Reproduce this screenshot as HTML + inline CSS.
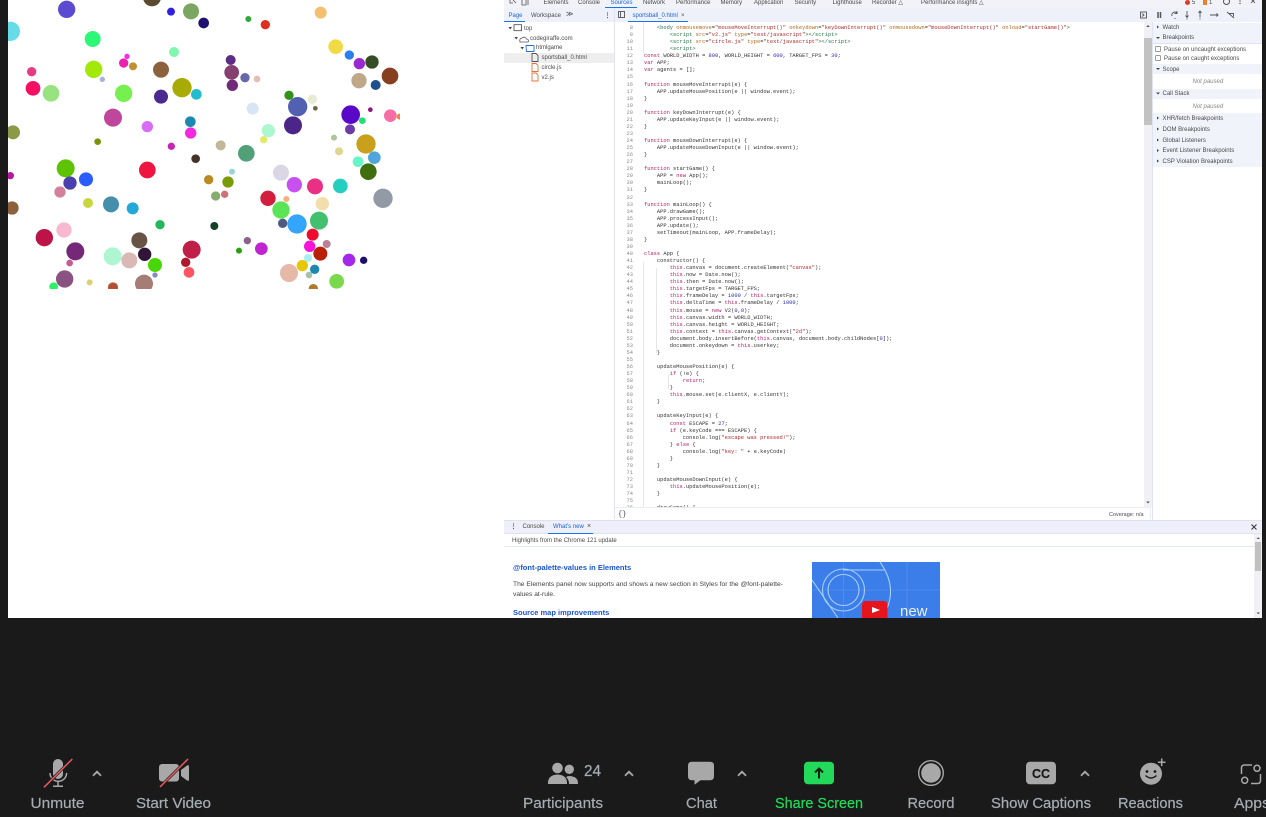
<!DOCTYPE html>
<html><head><meta charset="utf-8"><style>
html,body{margin:0;padding:0;width:1266px;height:817px;overflow:hidden;background:#1a1a1a}
#white{position:absolute;left:8px;top:0;width:1254px;height:618px;background:#fff;overflow:hidden}
#dev{position:absolute;left:0;top:0;width:1262px;height:618px;overflow:hidden;font-family:"Liberation Sans",sans-serif;color:#444;filter:blur(.35px)}
#dev div{position:absolute}
.t{position:absolute;font-size:6px;line-height:8px;white-space:nowrap;color:#4a4a4a;margin-top:.8px}
.b{color:#1a63d8}
pre{position:absolute;margin:0;font-family:"Liberation Mono",monospace;font-size:5.38px;line-height:7.06px;color:#333}
i{font-style:normal}
.k{color:#b5206e}.s{color:#b02a2a}.n{color:#2a2ab0}.a{color:#b06a20}.g{color:#2a7a4a}
</style></head><body>
<div id="white"></div>
<svg style="position:absolute;left:0;top:0;filter:blur(.3px)" width="420" height="300" viewBox="0 0 1260 900">
<defs><clipPath id="c"><rect x="24" y="0" width="1176" height="867"/></clipPath></defs>
<g clip-path="url(#c)">
<circle cx="200" cy="28" r="26" fill="#5a4bd1"/><circle cx="456" cy="-8" r="27" fill="#5c4a2e"/><circle cx="513" cy="35" r="12" fill="#2f1fe0"/><circle cx="573" cy="34" r="24" fill="#7ba662"/><circle cx="611" cy="69" r="16" fill="#1f1170"/><circle cx="745" cy="57" r="9" fill="#2fa83a"/><circle cx="796" cy="74" r="14" fill="#e02f20"/><circle cx="962" cy="38" r="18" fill="#f5bf70"/><circle cx="31" cy="94" r="29" fill="#66dde6"/><circle cx="278" cy="117" r="24" fill="#2df777"/><circle cx="522" cy="156" r="15" fill="#80f7ae"/><circle cx="381" cy="169" r="8" fill="#ee30e0"/><circle cx="371" cy="189" r="14" fill="#ee20b0"/><circle cx="399" cy="199" r="12" fill="#c29030"/><circle cx="692" cy="180" r="15" fill="#5c2d85"/><circle cx="695" cy="217" r="22" fill="#854070"/><circle cx="735" cy="233" r="14" fill="#6568aa"/><circle cx="771" cy="237" r="10" fill="#e5bdb5"/><circle cx="697" cy="256" r="17" fill="#722a7a"/><circle cx="281" cy="208" r="26" fill="#a2e808"/><circle cx="307" cy="238" r="8" fill="#a5b3e0"/><circle cx="483" cy="209" r="24" fill="#8c623c"/><circle cx="95" cy="215" r="14" fill="#e63b80"/><circle cx="99" cy="265" r="22" fill="#f50f62"/><circle cx="153" cy="280" r="25" fill="#98e380"/><circle cx="371" cy="280" r="26" fill="#76f04f"/><circle cx="483" cy="290" r="21" fill="#4a2a8e"/><circle cx="546" cy="263" r="29" fill="#a8ab05"/><circle cx="589" cy="283" r="16" fill="#22bccf"/><circle cx="1007" cy="140" r="22" fill="#f2d946"/><circle cx="1048" cy="165" r="14" fill="#2a80f0"/><circle cx="1078" cy="191" r="17" fill="#9a28d0"/><circle cx="1116" cy="186" r="20" fill="#344d25"/><circle cx="1170" cy="228" r="25" fill="#864020"/><circle cx="1077" cy="242" r="23" fill="#bfa788"/><circle cx="1127" cy="255" r="15" fill="#20508a"/><circle cx="867" cy="286" r="14" fill="#33901a"/><circle cx="937" cy="298" r="14" fill="#e5ebd5"/><circle cx="893" cy="320" r="29" fill="#5260b2"/><circle cx="946" cy="325" r="7" fill="#6a6545"/><circle cx="758" cy="326" r="18" fill="#d8e5f5"/><circle cx="879" cy="376" r="27" fill="#4c2589"/><circle cx="1052" cy="344" r="28" fill="#5a08c8"/><circle cx="1111" cy="329" r="7" fill="#93127e"/><circle cx="1087" cy="362" r="10" fill="#1fe070"/><circle cx="1171" cy="347" r="19" fill="#f76da5"/><circle cx="1199" cy="350" r="9" fill="#f5853a"/><circle cx="1050" cy="388" r="15" fill="#6e3aa8"/><circle cx="339" cy="353" r="27" fill="#c0459c"/><circle cx="442" cy="380" r="17" fill="#d86cf5"/><circle cx="571" cy="365" r="16" fill="#1c8ab0"/><circle cx="572" cy="399" r="17" fill="#f528e0"/><circle cx="791" cy="419" r="11" fill="#e3ea6a"/><circle cx="805" cy="392" r="20" fill="#adf7d0"/><circle cx="1002" cy="413" r="9" fill="#aec49a"/><circle cx="39" cy="397" r="21" fill="#8c9a48"/><circle cx="293" cy="425" r="10" fill="#7a9208"/><circle cx="514" cy="439" r="11" fill="#c228b8"/><circle cx="662" cy="436" r="15" fill="#c0b898"/><circle cx="739" cy="460" r="25" fill="#52a078"/><circle cx="1098" cy="432" r="29" fill="#c9a01c"/><circle cx="1017" cy="454" r="12" fill="#ddd68e"/><circle cx="1123" cy="473" r="19" fill="#4fa5dc"/><circle cx="1074" cy="485" r="16" fill="#68f5c8"/><circle cx="1105" cy="515" r="25" fill="#3e6e10"/><circle cx="587" cy="476" r="13" fill="#463228"/><circle cx="442" cy="510" r="25" fill="#ee1540"/><circle cx="197" cy="505" r="27" fill="#5ec305"/><circle cx="258" cy="538" r="21" fill="#2a5cff"/><circle cx="210" cy="549" r="20" fill="#4a40ad"/><circle cx="31" cy="527" r="11" fill="#b818a0"/><circle cx="180" cy="576" r="17" fill="#d4809c"/><circle cx="843" cy="518" r="24" fill="#dbd6e5"/><circle cx="696" cy="515" r="9" fill="#9ad5d5"/><circle cx="626" cy="539" r="14" fill="#ba8a20"/><circle cx="684" cy="546" r="17" fill="#7a9a08"/><circle cx="883" cy="554" r="23" fill="#c850ee"/><circle cx="945" cy="559" r="24" fill="#e93083"/><circle cx="1021" cy="558" r="22" fill="#25cfc0"/><circle cx="647" cy="588" r="14" fill="#87ad70"/><circle cx="674" cy="583" r="11" fill="#cf7078"/><circle cx="804" cy="595" r="23" fill="#d21f3e"/><circle cx="859" cy="597" r="9" fill="#f8ae7e"/><circle cx="967" cy="611" r="20" fill="#f3deab"/><circle cx="1149" cy="595" r="29" fill="#919aa5"/><circle cx="36" cy="624" r="20" fill="#8e603c"/><circle cx="264" cy="609" r="15" fill="#c9d640"/><circle cx="333" cy="613" r="24" fill="#458faa"/><circle cx="398" cy="625" r="18" fill="#24a8d8"/><circle cx="843" cy="630" r="26" fill="#5be455"/><circle cx="848" cy="670" r="14" fill="#4e5a80"/><circle cx="891" cy="672" r="29" fill="#33a5fa"/><circle cx="957" cy="662" r="27" fill="#42c06e"/><circle cx="480" cy="674" r="14" fill="#22b85a"/><circle cx="643" cy="678" r="12" fill="#144028"/><circle cx="133" cy="713" r="26" fill="#bc1448"/><circle cx="192" cy="690" r="23" fill="#f8b8d0"/><circle cx="418" cy="721" r="24" fill="#685444"/><circle cx="938" cy="704" r="18" fill="#f00a30"/><circle cx="742" cy="722" r="11" fill="#8c6090"/><circle cx="980" cy="732" r="12" fill="#bc8098"/><circle cx="226" cy="754" r="27" fill="#762878"/><circle cx="784" cy="746" r="19" fill="#c024d0"/><circle cx="717" cy="752" r="9" fill="#2ca00a"/><circle cx="929" cy="739" r="17" fill="#f515d8"/><circle cx="338" cy="769" r="27" fill="#aef5d2"/><circle cx="388" cy="781" r="24" fill="#d9b8b5"/><circle cx="434" cy="763" r="20" fill="#301538"/><circle cx="575" cy="749" r="27" fill="#c02048"/><circle cx="961" cy="761" r="21" fill="#b82008"/><circle cx="924" cy="774" r="12" fill="#a8eef5"/><circle cx="209" cy="789" r="10" fill="#c85898"/><circle cx="465" cy="795" r="21" fill="#48d808"/><circle cx="557" cy="787" r="14" fill="#ad1a30"/><circle cx="1047" cy="780" r="19" fill="#a428e8"/><circle cx="1091" cy="781" r="11" fill="#1e1068"/><circle cx="944" cy="808" r="14" fill="#1c88b0"/><circle cx="567" cy="817" r="16" fill="#ff5560"/><circle cx="465" cy="825" r="8" fill="#8c88c0"/><circle cx="867" cy="819" r="27" fill="#e5b8a8"/><circle cx="907" cy="797" r="17" fill="#e8c60c"/><circle cx="927" cy="825" r="10" fill="#a8c0b0"/><circle cx="194" cy="837" r="26" fill="#8a5280"/><circle cx="269" cy="847" r="9" fill="#e0cf70"/><circle cx="1010" cy="844" r="22" fill="#7ad84c"/><circle cx="432" cy="851" r="27" fill="#a67d75"/><circle cx="161" cy="860" r="13" fill="#2cf068"/><circle cx="339" cy="862" r="15" fill="#b25030"/><circle cx="940" cy="866" r="14" fill="#b07a2c"/>
</g></svg>

<div id="dev">
<div style="left:504px;top:0;width:758px;height:8px;background:#f1f3f9"></div>
<div style="left:504px;top:8px;width:758px;height:14px;background:#eef1f9"></div>
<div style="left:504px;top:22px;width:758px;height:1px;background:#dfe4f2"></div>
<div style="left:605px;top:7px;width:32px;height:1.2px;background:#1a73e8"></div>
<span class="t" style="left:543.5px;top:-1.5px">Elements</span><span class="t" style="left:578px;top:-1.5px">Console</span><span class="t b" style="left:610.5px;top:-1.5px">Sources</span><span class="t" style="left:643px;top:-1.5px">Network</span><span class="t" style="left:676px;top:-1.5px">Performance</span><span class="t" style="left:720.5px;top:-1.5px">Memory</span><span class="t" style="left:754px;top:-1.5px">Application</span><span class="t" style="left:794.5px;top:-1.5px">Security</span><span class="t" style="left:832.5px;top:-1.5px">Lighthouse</span><span class="t" style="left:872px;top:-1.5px">Recorder △</span><span class="t" style="left:921px;top:-1.5px">Performance insights △</span>
<svg style="position:absolute;left:504px;top:0" width="30" height="8"><path d="M6 0v3h3M12 3L9 0M18 0v5h4V0M24 0v5" stroke="#555" fill="none" stroke-width=".8"/></svg>
<span style="position:absolute;left:1185px;top:0;width:5px;height:5px;border-radius:50%;background:#e03a2e"></span><span class="t" style="left:1192px;top:-1.5px">5</span>
<span style="position:absolute;left:1203px;top:0;width:4px;height:5px;background:#e8812a"></span><span class="t" style="left:1209px;top:-1.5px">1</span>
<svg style="position:absolute;left:1220px;top:0" width="40" height="8"><circle cx="6.5" cy="1.5" r="3" fill="none" stroke="#555"/><circle cx="20" cy="1" r=".7" fill="#555"/><circle cx="20" cy="3.5" r=".7" fill="#555"/><path d="M31 -1l4 4M35 -1l-4 4" stroke="#444" stroke-width=".8"/></svg>

<!-- sources nav -->
<div style="left:504px;top:22px;width:110px;height:496px;background:#fff"></div>
<div style="left:614px;top:8px;width:1px;height:511px;background:#e0e4ef"></div>
<span class="t b" style="left:508.5px;top:11px">Page</span><div style="left:504px;top:21px;width:21px;height:1.2px;background:#1a73e8"></div>
<span class="t" style="left:531px;top:11px">Workspace</span><span class="t" style="left:566px;top:10px;font-size:7px">≫</span>
<span class="t" style="left:604.5px;top:11px;font-weight:bold">⋮</span>
<svg style="position:absolute;left:617px;top:10px" width="12" height="10"><rect x="1.5" y="1.5" width="6" height="6" fill="none" stroke="#555" stroke-width=".9"/><path d="M3.5 1.5v6" stroke="#555" stroke-width=".9"/></svg>
<span class="t b" style="left:632.5px;top:11px">sportsball_0.html</span><span class="t" style="left:681px;top:11px">×</span>
<div style="left:628px;top:21px;width:60px;height:1.2px;background:#1a73e8"></div>
<div style="left:504px;top:52.5px;width:110px;height:10px;background:#eeeeee"></div>
<svg style="position:absolute;left:504px;top:22px" width="40" height="60"><path d="M4.5 5l1.7 2.5L8 5zM10.5 15l1.7 2.5L14 15zM16.5 25l1.7 2.5L20 25z" fill="#444"/><rect x="10" y="2.7" width="7.5" height="6" fill="none" stroke="#444" stroke-width=".8"/><path d="M16 20h8q1.5-2.5-1.5-3q-1.5-3-4.500-1q-3 .5-2 4z" fill="none" stroke="#555" stroke-width=".8"/><path d="M22 23.5h7.5a.5.5 0 0 1 .5.5v5.500h-7.500z" fill="none" stroke="#2a6fd8" stroke-width=".9"/><path d="M28 31.500h4l2 2v6h-6z" fill="none" stroke="#555" stroke-width=".9"/><path d="M28 41.500h4l2 2v6h-6zM28 51h4l2 2v6h-6z" fill="none" stroke="#e8713a" stroke-width=".9"/></svg>
<span class="t" style="left:524px;top:24px">top</span><span class="t" style="left:530px;top:34px">codegiraffe.com</span><span class="t" style="left:536px;top:43.5px">htmlgame</span><span class="t" style="left:541.5px;top:53.5px">sportsball_0.html</span><span class="t" style="left:541.5px;top:63px">circle.js</span><span class="t" style="left:541.5px;top:73px">v2.js</span>

<!-- editor -->
<div style="left:615px;top:22px;width:529px;height:485px;background:#fff;overflow:hidden">
<pre style="left:0;top:3px;width:18px;text-align:right;color:#8a8a8a">8
9
10
11
12
13
14
15
16
17
18
19
20
21
22
23
24
25
26
27
28
29
30
31
32
33
34
35
36
37
38
39
40
41
42
43
44
45
46
47
48
49
50
51
52
53
54
55
56
57
58
59
60
61
62
63
64
65
66
67
68
69
70
71
72
73
74
75
76</pre>
<div style="left:27.5px;top:0;width:1px;height:31px;background:#e6e6e6"></div>
<div style="left:27.5px;top:240px;width:1px;height:245px;background:#e6e6e6"></div>
<div style="left:40.5px;top:246px;width:1px;height:85px;background:#e6e6e6"></div>
<div style="left:53px;top:353px;width:1px;height:14px;background:#e6e6e6"></div>
<pre style="left:29px;top:3px">    <i class="g">&lt;body</i> <i class="a">onmousemove</i>=<i class="s">"mouseMoveInterrupt()"</i> <i class="a">onkeydown</i>=<i class="s">"keyDownInterrupt()"</i> <i class="a">onmousedown</i>=<i class="s">"mouseDownInterrupt()"</i> <i class="a">onload</i>=<i class="s">"startGame()"</i><i class="g">&gt;</i>
        <i class="g">&lt;script</i> <i class="a">src</i>=<i class="s">"v2.js"</i> <i class="a">type</i>=<i class="s">"text/javascript"</i><i class="g">&gt;&lt;/script&gt;</i>
        <i class="g">&lt;script</i> <i class="a">src</i>=<i class="s">"circle.js"</i> <i class="a">type</i>=<i class="s">"text/javascript"</i><i class="g">&gt;&lt;/script&gt;</i>
        <i class="g">&lt;script&gt;</i>
<i class="k">const</i> WORLD_WIDTH = <i class="n">800</i>, WORLD_HEIGHT = <i class="n">600</i>, TARGET_FPS = <i class="n">30</i>;
<i class="k">var</i> APP;
<i class="k">var</i> agents = [];

<i class="k">function</i> mouseMoveInterrupt(e) {
    APP.updateMousePosition(e || window.event);
}

<i class="k">function</i> keyDownInterrupt(e) {
    APP.updateKeyInput(e || window.event);
}

<i class="k">function</i> mouseDownInterrupt(e) {
    APP.updateMouseDownInput(e || window.event);
}

<i class="k">function</i> startGame() {
    APP = <i class="k">new</i> App();
    mainLoop();
}

<i class="k">function</i> mainLoop() {
    APP.drawGame();
    APP.processInput();
    APP.update();
    setTimeout(mainLoop, APP.frameDelay);
}

<i class="k">class</i> App {
    constructor() {
        <i class="k">this</i>.canvas = document.createElement(<i class="s">"canvas"</i>);
        <i class="k">this</i>.now = Date.now();
        <i class="k">this</i>.then = Date.now();
        <i class="k">this</i>.targetFps = TARGET_FPS;
        <i class="k">this</i>.frameDelay = <i class="n">1000</i> / <i class="k">this</i>.targetFps;
        <i class="k">this</i>.deltaTime = <i class="k">this</i>.frameDelay / <i class="n">1000</i>;
        <i class="k">this</i>.mouse = <i class="k">new</i> V2(<i class="n">0</i>,<i class="n">0</i>);
        <i class="k">this</i>.canvas.width = WORLD_WIDTH;
        <i class="k">this</i>.canvas.height = WORLD_HEIGHT;
        <i class="k">this</i>.context = <i class="k">this</i>.canvas.getContext(<i class="s">"2d"</i>);
        document.body.insertBefore(<i class="k">this</i>.canvas, document.body.childNodes[<i class="n">0</i>]);
        document.onkeydown = <i class="k">this</i>.userkey;
    }

    updateMousePosition(e) {
        <i class="k">if</i> (!e) {
            <i class="k">return</i>;
        }
        <i class="k">this</i>.mouse.set(e.clientX, e.clientY);
    }

    updateKeyInput(e) {
        <i class="k">const</i> ESCAPE = <i class="n">27</i>;
        <i class="k">if</i> (e.keyCode === ESCAPE) {
            console.log(<i class="s">"escape was pressed!"</i>);
        } <i class="k">else</i> {
            console.log(<i class="s">"key: "</i> + e.keyCode)
        }
    }

    updateMouseDownInput(e) {
        <i class="k">this</i>.updateMousePosition(e);
    }

    drawGame() {</pre>
</div>
<!-- editor scrollbar -->
<div style="left:1144px;top:22px;width:7.5px;height:485px;background:#f1f0f4"></div>
<div style="left:1144px;top:38px;width:7.5px;height:87px;background:#c2c2c2"></div>
<svg style="position:absolute;left:1144px;top:22px" width="8" height="486"><path d="M2.2 5l1.8-2 1.8 2zM2.2 479.5l1.8 2 1.8-2z" fill="#555"/></svg>
<!-- status -->
<div style="left:615px;top:507px;width:536px;height:12px;background:#fff;border-top:1px solid #e8ecf6;box-sizing:border-box"></div>
<span class="t" style="left:618px;top:510px;font-family:'Liberation Mono',monospace;font-size:7px;color:#444">{}</span>
<span class="t" style="left:1109px;top:510px;font-size:5.5px">Coverage: n/a</span>
<div style="left:1149.5px;top:507px;width:1px;height:12px;background:#e8ecf6"></div>
<!-- toolbar right icons -->
<svg style="position:absolute;left:1135px;top:8px" width="120" height="14" fill="none" stroke="#555" stroke-width=".9"><rect x="5.5" y="4" width="6" height="6"/><path d="M7 5.5l2 1.5-2 1.500"/><path d="M23 4v6M25.5 4v6" stroke-width="1.5"/><path d="M37 8a3 3 0 0 1 5-3M42 3v2.500h-2.500M39.500 10.500h1M52 3v6M50.500 7.500L52 9.500l1.500-2M51.500 11h1M65 9.500v-6M63.500 5L65 3l1.500 2M64.500 11h1M75 7h8M81.500 5.500L83 7l-1.500 1.500M92 4l7 6M94 5.500h4.500v3"/></svg>
<!-- sidebar -->
<div style="left:1151.5px;top:22px;width:110.5px;height:596px;background:#fff;border-left:1px solid #dfe4f2;box-sizing:border-box"></div>
<div style="left:1152.5px;top:23px;width:110px;height:20px;background:#f1f3fb"></div>
<div style="left:1152.5px;top:42.5px;width:110px;height:.7px;background:#dfe4f2"></div>
<div style="left:1152.5px;top:64px;width:110px;height:9.5px;background:#f1f3fb"></div>
<div style="left:1152.5px;top:88.5px;width:110px;height:10px;background:#f1f3fb"></div>
<div style="left:1152.5px;top:113px;width:110px;height:53.5px;background:#f1f3fb"></div>
<span class="t" style="left:1162.5px;top:23px">Watch</span><span class="t" style="left:1162.5px;top:33.7px">Breakpoints</span><span class="t" style="left:1164px;top:45px">Pause on uncaught exceptions</span><span class="t" style="left:1164px;top:54px">Pause on caught exceptions</span><span class="t" style="left:1162.5px;top:65px">Scope</span><span class="t" style="left:1192.5px;top:77.5px;font-style:italic;color:#888">Not paused</span><span class="t" style="left:1162.5px;top:89.7px">Call Stack</span><span class="t" style="left:1192.5px;top:102px;font-style:italic;color:#888">Not paused</span><span class="t" style="left:1162.5px;top:114px">XHR/fetch Breakpoints</span><span class="t" style="left:1162.5px;top:125px">DOM Breakpoints</span><span class="t" style="left:1162.5px;top:136px">Global Listeners</span><span class="t" style="left:1162.5px;top:146.5px">Event Listener Breakpoints</span><span class="t" style="left:1162.5px;top:157px">CSP Violation Breakpoints</span>
<svg style="position:absolute;left:1152px;top:22px" width="12" height="146" fill="#444"><path d="M5 3.500l2 1.500-2 1.500zM4 15l2 2 2-2zM4 46l2 2 2-2zM4 70.500l2 2 2-2zM5 94.500l2 1.500-2 1.500zM5 105.500l2 1.500-2 1.500zM5 116.500l2 1.500-2 1.500zM5 127l2 1.500-2 1.500zM5 137.500l2 1.500-2 1.500z"/><rect x="3.500" y="24.500" width="5" height="5" rx=".6" fill="#fff" stroke="#777" stroke-width=".7"/><rect x="3.500" y="33.500" width="5" height="5" rx=".6" fill="#fff" stroke="#777" stroke-width=".7"/></svg>
<!-- drawer -->
<div style="left:504px;top:519.5px;width:758px;height:14px;background:#eeeff8;border-top:1px solid #dde3f4;border-bottom:1px solid #dde3f4;box-sizing:border-box"></div>
<div style="left:548px;top:532.5px;width:45px;height:1.2px;background:#1a73e8"></div>
<div style="left:504px;top:533.5px;width:758px;height:85px;background:#fff"></div>
<span class="t" style="left:510.5px;top:522.5px;font-weight:bold">⋮</span><span class="t" style="left:522.5px;top:522.5px">Console</span><span class="t b" style="left:553px;top:522.5px">What's new</span><span class="t" style="left:587px;top:522px;font-size:7px">×</span>
<svg style="position:absolute;left:1250px;top:523px" width="8" height="8"><path d="M1.500 1.500l5 5M6.500 1.500l-5 5" stroke="#333" stroke-width="1"/></svg>
<span class="t" style="left:512px;top:536px">Highlights from the Chrome 121 update</span>
<div style="left:504px;top:546px;width:750px;height:.8px;background:#e4e8f4"></div>
<span class="t" style="left:513px;top:562.8px;font-size:7.5px;font-weight:bold;color:#1a56d0">@font-palette-values in Elements</span>
<span class="t" style="left:513px;top:580px;font-size:6.7px;color:#444">The Elements panel now supports and shows a new section in Styles for the @font-palette-</span>
<span class="t" style="left:513px;top:590px;font-size:6.7px;color:#444">values at-rule.</span>
<span class="t" style="left:513px;top:608.3px;font-size:7.5px;font-weight:bold;color:#1a56d0">Source map improvements</span>
<svg style="position:absolute;left:812px;top:562px" width="128" height="56" viewBox="0 0 128 56"><rect width="128" height="56" fill="#3b7eea"/><g stroke="#5b94ee" stroke-width=".6"><path d="M31.500 0V56M0 28H128M95 0V56"/></g><g fill="none" stroke="#a8cdf8" stroke-width="1.100"><circle cx="31.500" cy="28" r="21"/><circle cx="31.500" cy="28" r="15.500"/><path d="M0 18L26 56M31 8H73M68 0Q88 28 70 56"/></g><rect x="50" y="39" width="25.500" height="20" rx="4" fill="#e6141c"/><path d="M60 45l8 3-8 3z" fill="#fff"/><text x="88" y="54" font-family="Liberation Sans,sans-serif" font-size="15" fill="#e8f0fd">new</text></svg>
<div style="left:1254px;top:534px;width:8px;height:84px;background:#f1f0f4"></div>
<div style="left:1255px;top:542px;width:6px;height:29px;background:#c0c0c0"></div>
<svg style="position:absolute;left:1254px;top:534px" width="8" height="84"><path d="M2.500 5l1.700-1.700L6 5zM2.500 78.500l1.700 1.700 1.800-1.700z" fill="#555"/></svg>
</div>
<div style="position:absolute;left:0;top:618px;width:1266px;height:199px;background:#1a1a1a"></div>
<div style="position:absolute;left:0;top:0;width:8px;height:618px;background:#1a1a1a"></div>
<div style="position:absolute;left:1262px;top:0;width:4px;height:618px;background:#1a1a1a"></div>

<!-- zoom toolbar -->
<svg style="position:absolute;left:0;top:745px" width="1266" height="72" viewBox="0 0 1266 72">
<g fill="#a8a8a8" stroke="none">
<!-- mic -->
<rect x="53" y="14" width="10" height="20" rx="5"/>
<path d="M50 28a8.300 8.300 0 0 0 16.600 0" fill="none" stroke="#a8a8a8" stroke-width="1.500"/>
<path d="M58 36v5M53 41.200h10" fill="none" stroke="#a8a8a8" stroke-width="1.500"/>
<path d="M44 42.300L72.300 14" stroke="#1a1a1a" stroke-width="2.800"/>
<path d="M44 42.300L72.300 14" stroke="#e85a5e" stroke-width="1.500"/>
<!-- camera -->
<rect x="159" y="19" width="20" height="17.500" rx="3"/>
<path d="M181 25l6-4.500q2-1 2 1v13q0 2-2 1l-6-4.500z"/>
<path d="M160 42L188 14" stroke="#1a1a1a" stroke-width="2.800"/>
<path d="M160 42L188 14" stroke="#e85a5e" stroke-width="1.500"/>
<!-- participants -->
<circle cx="557.500" cy="23" r="5.300"/><circle cx="569.300" cy="24.300" r="4.700"/>
<path d="M548 39q-.5-9 9.500-9.500 10 .5 9.500 9.500z"/>
<path d="M569 39h9q.5-7.500-8.500-8-2 0-3.500 1 3 2.500 3 7z"/>
<!-- chat -->
<path d="M692 16.700h18q4 0 4 4v10.500q0 4-4 4h-9.500l-6 4.500v-4.500h-2.500q-4 0-4-4V20.700q0-4 4-4z"/>
<!-- record -->
<circle cx="931" cy="28" r="9.800"/><circle cx="931" cy="28" r="12.300" fill="none" stroke="#a8a8a8" stroke-width="1.400"/>
<!-- cc -->
<rect x="1026" y="16.700" width="30" height="22.600" rx="4"/>
<!-- reactions -->
<circle cx="1151" cy="28.700" r="11"/>
<path d="M1161.700 13v8.600M1157.400 17.300h8.600" stroke="#1a1a1a" stroke-width="4.500"/>
<path d="M1161.700 13.500v7.600M1157.900 17.300h7.600" stroke="#a8a8a8" stroke-width="1.500"/>
<circle cx="1147" cy="26.500" r="1.400" fill="#1a1a1a"/><circle cx="1155" cy="26.500" r="1.400" fill="#1a1a1a"/>
<path d="M1145.500 30.500q5.500 5 11 0" fill="none" stroke="#1a1a1a" stroke-width="1.500"/>
<!-- apps -->
<g fill="none" stroke="#a8a8a8" stroke-width="1.500"><circle cx="1257" cy="23.300" r="3"/><circle cx="1244.700" cy="35.300" r="3"/><path d="M1252 20h-7.500q-3 0-3 3v6M1260.500 29v6.500q0 3-3 3H1251"/></g>
</g>
<!-- carets -->
<g fill="none" stroke="#a8a8a8" stroke-width="1.800"><path d="M93 30.700L97 26.700 101 30.700M625 30.700L629 26.700 633 30.700M738 30.700L742 26.700 746 30.700M1081 30.700L1085 26.700 1089 30.700"/></g>
<!-- share -->
<rect x="804" y="16.700" width="30" height="22.600" rx="4" fill="#22d95a"/>
<path d="M819 33.500V23.500M815 27.500L819 23.500 823 27.500" fill="none" stroke="#0f1f14" stroke-width="2"/>
<g font-family="Liberation Sans,sans-serif" font-size="14.500" fill="#a5acb3" stroke="#a5acb3" stroke-width=".2" text-anchor="middle">
<text x="57.500" y="63" textLength="54" lengthAdjust="spacingAndGlyphs">Unmute</text>
<text x="173.500" y="63" textLength="75" lengthAdjust="spacingAndGlyphs">Start Video</text>
<text x="563" y="63" textLength="80" lengthAdjust="spacingAndGlyphs">Participants</text>
<text x="701.500" y="63" textLength="31" lengthAdjust="spacingAndGlyphs">Chat</text>
<text x="819" y="63" textLength="88" lengthAdjust="spacingAndGlyphs" fill="#22d95a" stroke="#22d95a">Share Screen</text>
<text x="931" y="63" textLength="47" lengthAdjust="spacingAndGlyphs">Record</text>
<text x="1041" y="63" textLength="100" lengthAdjust="spacingAndGlyphs">Show Captions</text>
<text x="1150.500" y="63" textLength="65" lengthAdjust="spacingAndGlyphs">Reactions</text>
<text x="1252" y="63" textLength="36" lengthAdjust="spacingAndGlyphs">Apps</text>
<text x="592.500" y="31" font-size="16" textLength="17" lengthAdjust="spacingAndGlyphs">24</text>
<text x="1041" y="33" font-size="12.500" font-weight="bold" fill="#1a1a1a" stroke="#1a1a1a" textLength="18" lengthAdjust="spacingAndGlyphs">CC</text>
</g>
</svg>
</body></html>
